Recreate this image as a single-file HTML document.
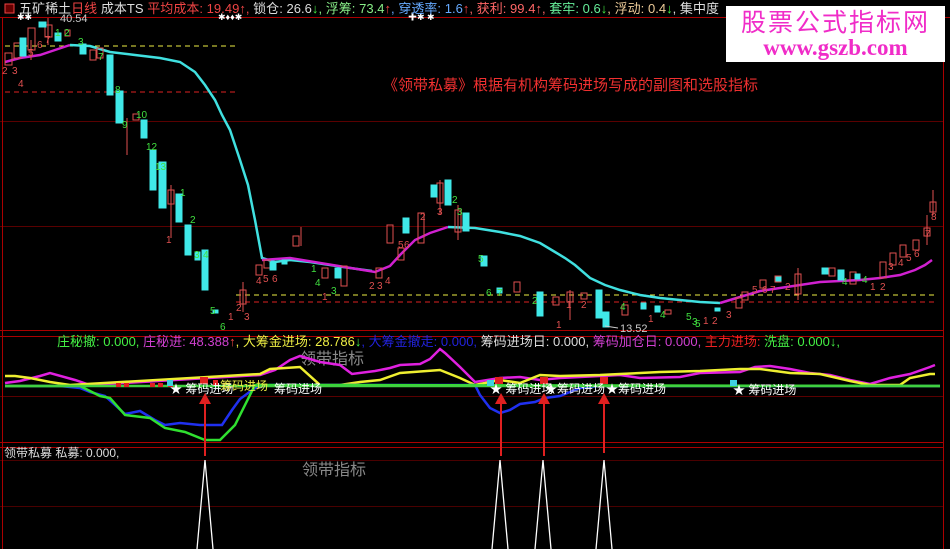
<!DOCTYPE html>
<html><head><meta charset="utf-8"><style>
html,body{margin:0;padding:0;background:#000;}
body{width:950px;height:549px;overflow:hidden;position:relative;font-family:"Liberation Sans","Noto Sans CJK SC",sans-serif;}
svg{position:absolute;left:0;top:0}
.t{font-family:"Liberation Sans","Noto Sans CJK SC",sans-serif;}
.wm{position:absolute;left:726px;top:6px;width:219px;height:56px;background:#fff;text-align:center;}
.wm div{color:#f02cc8;font-family:"Noto Sans CJK SC",sans-serif;font-size:25px;line-height:30px;letter-spacing:2px;}
.wm div.u{font-family:"Liberation Serif",serif;font-size:23px;line-height:24px;letter-spacing:0px;font-weight:bold;}
</style></head><body>
<svg width="950" height="549" viewBox="0 0 950 549">
<g stroke="#8a0000" stroke-width="1" fill="none">
<line x1="0" y1="17.5" x2="950" y2="17.5" stroke="#a00"/>
<line x1="0" y1="121.5" x2="944" y2="121.5" stroke="#5a0000"/>
<line x1="0" y1="226.5" x2="944" y2="226.5" stroke="#5a0000"/>
<line x1="0" y1="330.5" x2="944" y2="330.5" stroke="#a00"/>
<line x1="0" y1="336.5" x2="944" y2="336.5" stroke="#a00"/>
<line x1="0" y1="396.5" x2="944" y2="396.5" stroke="#5a0000"/>
<line x1="0" y1="442.5" x2="944" y2="442.5" stroke="#a00"/>
<line x1="0" y1="447.5" x2="944" y2="447.5" stroke="#a00"/>
<line x1="0" y1="460.5" x2="944" y2="460.5" stroke="#4a0000"/>
<line x1="0" y1="506.5" x2="944" y2="506.5" stroke="#4a0000"/>
<line x1="2.5" y1="17" x2="2.5" y2="549" stroke="#a00"/>
<line x1="943.5" y1="17" x2="943.5" y2="549" stroke="#a00"/>
</g>
<line x1="5" y1="46" x2="237" y2="46" stroke="#ee4" stroke-dasharray="5,4"/>
<line x1="5" y1="92" x2="237" y2="92" stroke="#d22" stroke-dasharray="5,4"/>
<line x1="236" y1="295" x2="938" y2="295" stroke="#ee4" stroke-dasharray="5,4"/>
<line x1="236" y1="302" x2="938" y2="302" stroke="#d22" stroke-dasharray="5,4"/>
<polyline fill="none" stroke="#d020d0" stroke-width="2.5" points="5,62 20,58 40,55 55,50 70,45"/>
<polyline fill="none" stroke="#40e0e0" stroke-width="2.5" points="70,45 90,46 110,52 135,55 160,58 180,62 195,72 205,85 215,100 222,115 230,130 240,160 248,185 255,220 262,258 275,262 290,260 310,262 330,265 350,268 372,271"/>
<polyline fill="none" stroke="#d020d0" stroke-width="2.5" points="262,260 290,258 375,272 390,266 400,255 415,240 430,233 448,227"/>
<polyline fill="none" stroke="#40e0e0" stroke-width="2.5" points="448,227 475,228 500,232 520,236 540,243 555,252 565,258 575,265 590,278 605,285 620,290 640,295 660,298 680,300 700,302 720,303"/>
<polyline fill="none" stroke="#d020d0" stroke-width="2.5" points="720,303 740,297 760,291 780,288 800,285 820,282 840,281 860,280 880,278 900,275 915,270 925,265 932,260"/>
<g stroke="#e05050" fill="none" stroke-width="1">
<rect x="5" y="53" width="7" height="12"/><rect x="14" y="43" width="7" height="15"/><rect x="28" y="28" width="7" height="22"/>
<rect x="45" y="25" width="7" height="12"/><rect x="65" y="30" width="5" height="6"/><rect x="90" y="50" width="6" height="10"/><rect x="97" y="48" width="6" height="10"/>
<rect x="133" y="114" width="6" height="6"/><rect x="168" y="190" width="6" height="14"/>
<rect x="240" y="290" width="6" height="14"/><rect x="256" y="265" width="6" height="10"/><rect x="264" y="260" width="6" height="8"/><rect x="293" y="236" width="6" height="10"/>
<rect x="322" y="268" width="6" height="10"/><rect x="341" y="266" width="6" height="20"/><rect x="376" y="268" width="6" height="10"/>
<rect x="387" y="225" width="6" height="18"/><rect x="398" y="248" width="6" height="12"/><rect x="418" y="213" width="6" height="30"/><rect x="437" y="183" width="6" height="20"/>
<rect x="455" y="210" width="6" height="22"/><rect x="514" y="282" width="6" height="10"/><rect x="553" y="297" width="6" height="8"/>
<rect x="567" y="292" width="6" height="10"/><rect x="581" y="293" width="6" height="6"/><rect x="622" y="305" width="6" height="10"/><rect x="665" y="310" width="6" height="4"/>
<rect x="736" y="298" width="6" height="10"/><rect x="742" y="292" width="6" height="8"/><rect x="760" y="280" width="6" height="8"/><rect x="775" y="276" width="6" height="6"/>
<rect x="795" y="274" width="6" height="20"/><rect x="829" y="268" width="6" height="8"/><rect x="850" y="272" width="6" height="12"/><rect x="880" y="262" width="6" height="16"/>
<rect x="890" y="253" width="6" height="12"/><rect x="900" y="245" width="6" height="12"/><rect x="913" y="240" width="6" height="10"/><rect x="924" y="228" width="6" height="8"/><rect x="930" y="202" width="6" height="10"/>
<line x1="31" y1="40" x2="31" y2="60"/><line x1="48" y1="18" x2="48" y2="45"/><line x1="127" y1="118" x2="127" y2="155"/><line x1="171" y1="185" x2="171" y2="238"/>
<line x1="243" y1="282" x2="243" y2="312"/><line x1="301" y1="227" x2="301" y2="246"/><line x1="440" y1="180" x2="440" y2="215"/><line x1="458" y1="205" x2="458" y2="240"/>
<line x1="570" y1="290" x2="570" y2="320"/><line x1="798" y1="268" x2="798" y2="300"/><line x1="927" y1="215" x2="927" y2="245"/><line x1="933" y1="190" x2="933" y2="215"/>
</g>
<g fill="#40e8e8" stroke="#40e8e8">
<rect x="20" y="38" width="6" height="18"/><rect x="39" y="22" width="7" height="5"/><rect x="55" y="33" width="6" height="8"/>
<rect x="80" y="44" width="6" height="10"/><rect x="107" y="55" width="6" height="40"/><rect x="116" y="91" width="7" height="32"/>
<rect x="141" y="120" width="6" height="18"/><rect x="150" y="150" width="6" height="40"/><rect x="159" y="162" width="7" height="46"/>
<rect x="176" y="194" width="6" height="28"/><rect x="185" y="225" width="6" height="30"/><rect x="195" y="252" width="5" height="8"/><rect x="202" y="250" width="6" height="40"/>
<rect x="213" y="310" width="5" height="3"/><rect x="270" y="262" width="6" height="8"/><rect x="282" y="260" width="5" height="4"/><rect x="335" y="268" width="6" height="10"/>
<rect x="403" y="218" width="6" height="15"/><rect x="431" y="185" width="6" height="12"/><rect x="445" y="180" width="6" height="25"/><rect x="463" y="213" width="6" height="18"/>
<rect x="481" y="256" width="6" height="10"/><rect x="497" y="288" width="5" height="5"/><rect x="537" y="292" width="6" height="24"/><rect x="596" y="290" width="6" height="28"/>
<rect x="603" y="312" width="6" height="15"/><rect x="641" y="303" width="5" height="6"/><rect x="655" y="306" width="5" height="6"/><rect x="715" y="308" width="5" height="3"/>
<rect x="776" y="277" width="5" height="4"/><rect x="822" y="268" width="6" height="6"/><rect x="838" y="270" width="6" height="10"/><rect x="855" y="274" width="5" height="5"/>
</g>
<g class="t" font-size="10" fill="#e05050">
<text x="2" y="74">2</text><text x="12" y="74">3</text><text x="18" y="87">4</text><text x="28" y="56">5</text><text x="37" y="48">6</text><text x="45" y="43">7</text>
<text x="166" y="243">1</text><text x="228" y="320">1</text><text x="236" y="311">2</text><text x="244" y="320">3</text><text x="256" y="284">4</text><text x="263" y="282">5</text><text x="272" y="282">6</text>
<text x="322" y="300">1</text><text x="369" y="289">2</text><text x="377" y="289">3</text><text x="385" y="284">4</text><text x="398" y="248">5</text><text x="404" y="248">6</text><text x="420" y="220">2</text><text x="437" y="215">3</text>
<text x="556" y="328">1</text><text x="581" y="308">2</text><text x="566" y="308">1</text><text x="648" y="322">1</text><text x="703" y="324">1</text><text x="712" y="324">2</text><text x="726" y="318">3</text>
<text x="752" y="293">5</text><text x="762" y="293">6</text><text x="770" y="293">7</text><text x="785" y="290">2</text><text x="870" y="290">1</text><text x="880" y="290">2</text><text x="888" y="270">3</text><text x="898" y="266">4</text><text x="906" y="261">5</text><text x="914" y="257">6</text><text x="925" y="237">7</text><text x="931" y="220">8</text>
</g>
<g class="t" font-size="10" fill="#40e040">
<text x="55" y="36">1</text><text x="64" y="36">2</text><text x="78" y="45">3</text><text x="98" y="60">7</text><text x="115" y="93">8</text><text x="122" y="128">9</text><text x="136" y="118">10</text><text x="146" y="150">12</text><text x="155" y="170">13</text>
<text x="180" y="196">1</text><text x="190" y="223">2</text><text x="194" y="258">3</text><text x="203" y="258">4</text><text x="210" y="314">5</text><text x="220" y="330">6</text>
<text x="311" y="272">1</text><text x="315" y="286">4</text><text x="331" y="294">3</text><text x="452" y="203">2</text><text x="457" y="215">3</text><text x="478" y="262">5</text><text x="486" y="296">6</text><text x="497" y="296">7</text><text x="532" y="304">2</text><text x="620" y="310">4</text><text x="660" y="318">4</text>
<text x="686" y="320">5</text><text x="692" y="325">3</text><text x="695" y="327">5</text><text x="842" y="285">4</text><text x="862" y="283">4</text>
</g>
<text class="t" x="620" y="332" font-size="11" fill="#ccc">13.52</text>
<line x1="605" y1="326" x2="618" y2="328" stroke="#ccc"/>
<text class="t" x="60" y="22" font-size="11" fill="#ccc">40.54</text>
<text class="t" x="17" y="20" font-size="9" fill="#fff">✱✱</text>
<text class="t" x="218" y="20" font-size="9" fill="#fff">✱♦♦✱</text>
<text class="t" x="408" y="20" font-size="9" fill="#fff">✚✱ ✱</text>
<text class="t" x="19" y="13" font-size="13" textLength="700"><tspan fill="#ddd">五矿稀土</tspan><tspan fill="#e44">日线</tspan><tspan fill="#ddd"> 成本TS </tspan><tspan fill="#e44"> 平均成本: 19.49↑,</tspan><tspan fill="#ddd"> 锁仓: 26.6</tspan><tspan fill="#4e4">↓</tspan><tspan fill="#8e8">, 浮筹: 73.4</tspan><tspan fill="#e44">↑</tspan><tspan fill="#6af">, 穿透率: 1.6</tspan><tspan fill="#e44">↑</tspan><tspan fill="#f66">, 获利: 99.4↑,</tspan><tspan fill="#6e9"> 套牢: 0.6</tspan><tspan fill="#4e4">↓</tspan><tspan fill="#ec9">, 浮动: 0.4</tspan><tspan fill="#4e4">↓</tspan><tspan fill="#ddd">, 集中度</tspan></text>
<rect x="5" y="4" width="9" height="9" fill="#600" stroke="#e44"/>
<text class="t" x="383" y="90" font-size="15" fill="#f03030">《领带私募》根据有机构筹码进场写成的副图和选股指标</text>
<text class="t" x="57" y="346" font-size="13" textLength="783"><tspan fill="#4e4">庄秘撤: 0.000,</tspan><tspan fill="#d040d0"> 庄秘进: 48.388</tspan><tspan fill="#e44">↑</tspan><tspan fill="#ee4">, 大筹金进场: 28.786</tspan><tspan fill="#4e4">↓</tspan><tspan fill="#22d">, 大筹金撤走: 0.000,</tspan><tspan fill="#ddd">  筹码进场日: 0.000,</tspan><tspan fill="#d040d0"> 筹码加仓日: 0.000,</tspan><tspan fill="#e22"> 主力进场:</tspan><tspan fill="#4e4"> 洗盘: 0.000↓,</tspan></text>
<text class="t" x="300" y="364" font-size="16" fill="#888">领带指标</text>
<polyline fill="none" stroke="#e020e0" stroke-width="2.5" points="5,383 20,381 40,376 50,373 75,380 90,385 260,375 275,370 290,360 300,356 320,362 340,365 352,374 375,371 390,368 400,365 420,364 430,359 440,349 445,353 460,367 475,382 500,378 520,377 540,380 560,378 580,377 620,375 640,378 680,377 700,373 740,372 755,367 770,366 790,369 810,373 830,375 850,380 870,384 890,378 910,374 930,367 935,365"/>
<polyline fill="none" stroke="#eeee30" stroke-width="2.5" points="5,376 15,376 30,378 50,382 70,385 260,374 270,369 300,367 320,385 340,385 360,382 380,380 400,373 440,370 460,378 475,385 500,380 520,383 540,375 560,376 600,375 620,374 660,372 700,371 740,369 760,369 790,373 820,374 850,381 870,385 900,385 910,378 930,374 935,374"/>
<polyline fill="none" stroke="#2030f0" stroke-width="2.5" points="5,386 60,386 80,388 90,392 105,396 115,405 125,414 140,411 155,420 165,425 180,423 200,425 222,425 232,410 240,399 255,388 270,385 475,385 480,395 490,408 500,413 510,410 520,404 535,402 545,398 560,396 580,388 600,386 940,386"/>
<polyline fill="none" stroke="#30e030" stroke-width="2.5" points="5,386 80,386 90,391 100,396 110,398 125,415 150,418 165,428 185,432 205,440 220,440 235,425 255,385 940,386"/>
<line x1="5" y1="386" x2="940" y2="386" stroke="#40d040" stroke-width="2.5"/>
<g fill="#e02020"><rect x="116" y="383" width="5" height="4"/><rect x="124" y="383" width="5" height="4"/><rect x="150" y="383" width="5" height="4"/><rect x="158" y="383" width="5" height="4"/><rect x="168" y="381" width="5" height="6"/><rect x="200" y="377" width="8" height="7"/><rect x="213" y="380" width="5" height="5"/><rect x="495" y="377" width="8" height="7"/><rect x="540" y="377" width="8" height="7"/><rect x="600" y="377" width="8" height="7"/></g>
<g fill="#40d0e0"><rect x="167" y="380" width="6" height="6"/><rect x="487" y="380" width="7" height="6"/><rect x="730" y="380" width="7" height="6"/></g>
<g class="t" font-size="12" fill="#fff">
<text x="170" y="393">★ 筹码进场</text><text x="220" y="390" fill="#ee4">筹码进场</text><text x="274" y="393">筹码进场</text>
<text x="490" y="393">★ 筹码进场</text><text x="545" y="393">★筹码进场</text><text x="606" y="393">★筹码进场</text>
<text x="733" y="394">★ 筹码进场</text></g>
<g stroke="#e02020" stroke-width="2" fill="#e02020">
<line x1="205" y1="400" x2="205" y2="456"/><polygon points="199,404 205,393 211,404" stroke="none"/>
<line x1="501" y1="400" x2="501" y2="456"/><polygon points="495,404 501,393 507,404" stroke="none"/>
<line x1="544" y1="400" x2="544" y2="456"/><polygon points="538,404 544,393 550,404" stroke="none"/>
<line x1="604" y1="400" x2="604" y2="453"/><polygon points="598,404 604,393 610,404" stroke="none"/>
</g>
<text class="t" x="4" y="457" font-size="12" fill="#ddd">领带私募  私募: 0.000,</text>
<text class="t" x="302" y="475" font-size="16" fill="#888">领带指标</text>
<g fill="none" stroke="#fff" stroke-width="1.3">
<polyline points="197,549 205,460 213,549"/><polyline points="492,549 500,460 508,549"/>
<polyline points="535,549 543,460 551,549"/><polyline points="596,549 604,460 612,549"/>
</g>
</svg>
<div class="wm"><div>股票公式指标网</div><div class="u">www.gszb.com</div></div>
</body></html>
